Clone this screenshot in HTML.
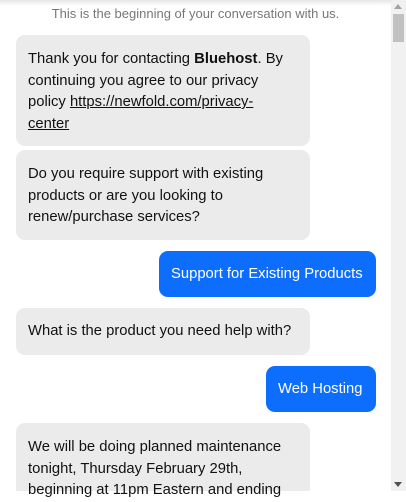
<!DOCTYPE html>
<html><head><style>
html,body{margin:0;padding:0;width:406px;height:491px;overflow:hidden;background:#fff;font-family:"Liberation Sans",sans-serif;}
.top{position:absolute;left:0;top:0;width:391px;height:6px;background:linear-gradient(#e6e6e6,#fff);}
.hdr{position:absolute;left:0;width:391px;top:6px;text-align:center;font-size:13px;color:#777;}
.b{position:absolute;box-sizing:border-box;border-radius:9px;font-size:14.8px;line-height:21.5px;white-space:nowrap;color:#111;}
.l{left:16px;width:294px;background:#ebebeb;padding:14px 12px;}
.r{background:#0d6efd;color:#fff;padding:0 12px;height:46px;line-height:47px;}
a{color:#111;text-decoration:underline;}
.sb{position:absolute;right:0;top:0;width:15px;height:491px;background:#f1f1f1;}
.th{position:absolute;left:2px;top:14px;width:11px;height:28px;background:#c1c1c1;}
.up{position:absolute;left:3px;top:4px;border-left:4.5px solid transparent;border-right:4.5px solid transparent;border-bottom:5px solid #a3a3a3;}
.dn{position:absolute;left:3px;bottom:4px;border-left:4.5px solid transparent;border-right:4.5px solid transparent;border-top:5px solid #505050;}
</style></head><body>
<div class="top"></div>
<div class="hdr">This is the beginning of your conversation with us.</div>
<div class="b l" style="top:35px;height:111px;">Thank you for contacting <b>Bluehost</b>. By<br>continuing you agree to our privacy<br>policy <a>https://newfold.com/privacy-<br>center</a></div>
<div class="b l" style="top:150px;height:90px;">Do you require support with existing<br>products or are you looking to<br>renew/purchase services?</div>
<div class="b r" style="left:159px;width:217px;top:251px;">Support for Existing Products</div>
<div class="b l" style="top:308px;height:47px;padding-top:13px;">What is the product you need help with?</div>
<div class="b r" style="left:266px;width:110px;top:366px;">Web Hosting</div>
<div class="b l" style="top:423px;height:68px;border-bottom-left-radius:0;border-bottom-right-radius:0;">We will be doing planned maintenance<br>tonight, Thursday February 29th,<br>beginning at 11pm Eastern and ending</div>
<div class="sb"><div class="up"></div><div class="th"></div><div class="dn"></div></div>
</body></html>
